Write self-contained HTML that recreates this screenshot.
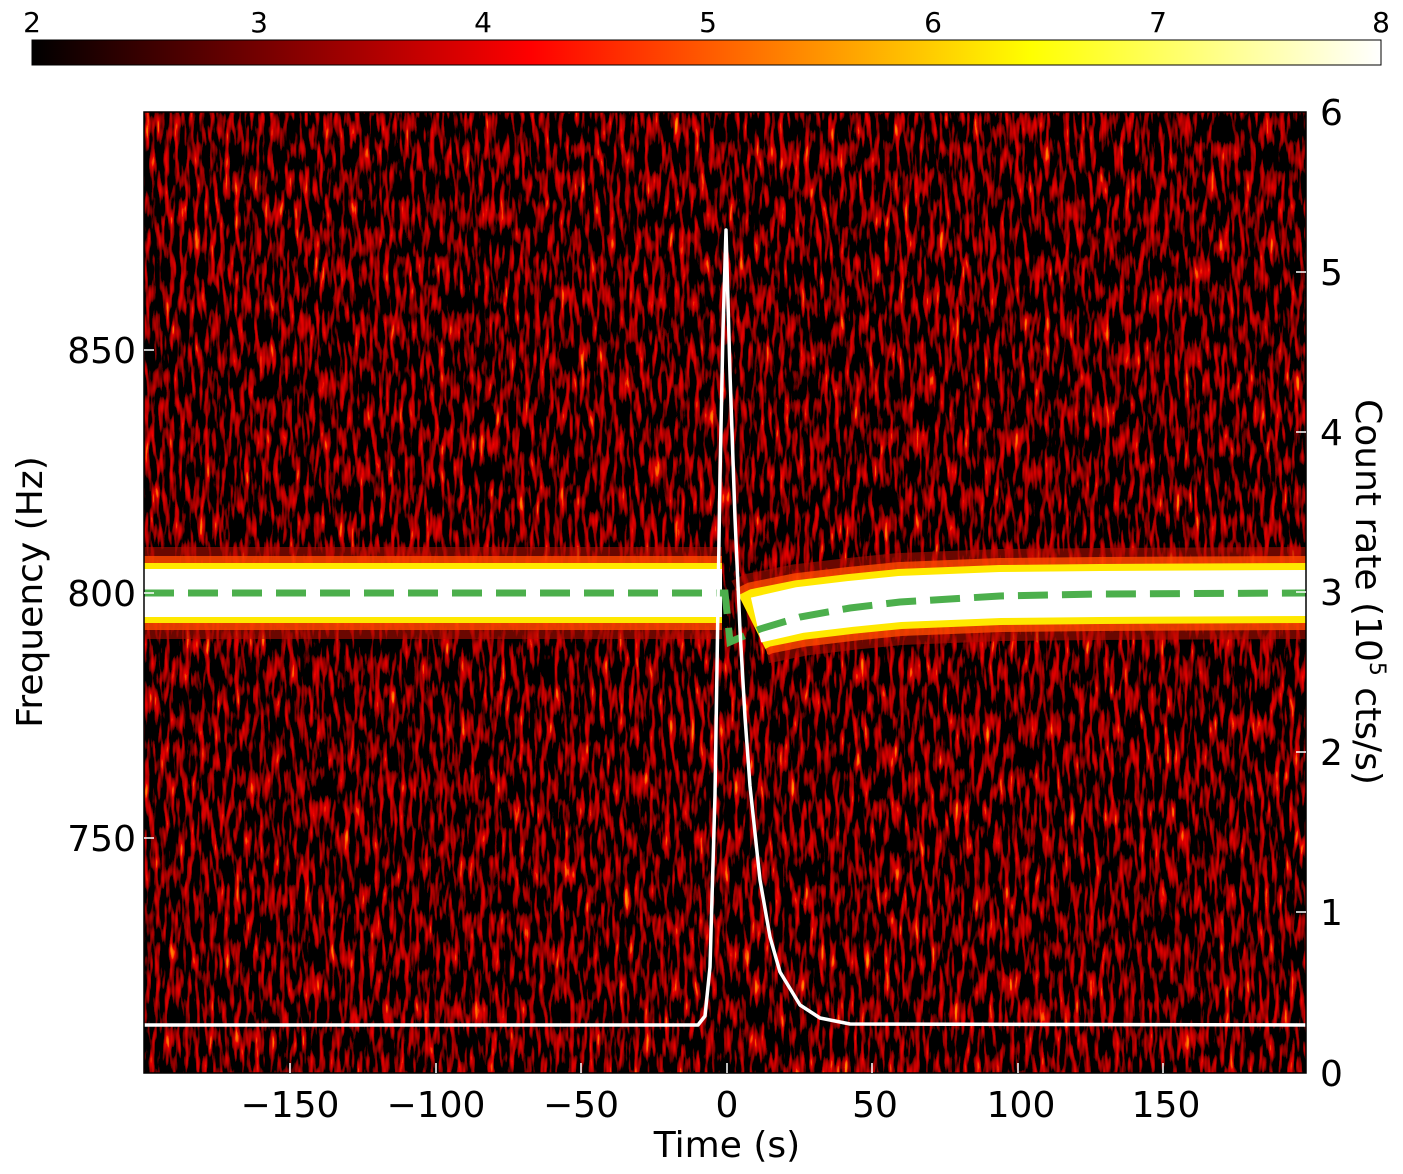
<!DOCTYPE html>
<html><head><meta charset="utf-8"><style>
html,body{margin:0;padding:0;background:#fff;}
svg{display:block;font-family:"DejaVu Sans","Liberation Sans",sans-serif;}
</style></head><body>
<svg width="1403" height="1174" viewBox="0 0 1403 1174" xmlns="http://www.w3.org/2000/svg">
<defs>
<linearGradient id="hot" x1="0" x2="1" y1="0" y2="0">
<stop offset="0" stop-color="#000"/>
<stop offset="0.37" stop-color="#ff0000"/>
<stop offset="0.74" stop-color="#ffff00"/>
<stop offset="1" stop-color="#ffffff"/>
</linearGradient>
<filter id="noise" x="0" y="0" width="100%" height="100%">
<feTurbulence type="fractalNoise" baseFrequency="0.2 0.035" numOctaves="2" seed="7"/>
<feColorMatrix type="matrix" values="3.2 0 0 0 -1.55  2 0 0 0 -1.5  0 0 0 0 0  0 0 0 0 1"/>
</filter>
<clipPath id="pc"><rect x="144" y="112" width="1162" height="961"/></clipPath>
</defs>
<rect x="32" y="40" width="1349" height="25" fill="url(#hot)" stroke="#000" stroke-width="1"/>
<g font-size="28" fill="#000" text-anchor="middle">
<text x="32" y="32">2</text><text x="259" y="32">3</text><text x="483" y="32">4</text>
<text x="708" y="32">5</text><text x="933" y="32">6</text><text x="1158" y="32">7</text><text x="1381" y="32">8</text>
</g>
<g clip-path="url(#pc)">
<rect x="144" y="112" width="1162" height="961" fill="#200000"/>
<rect x="144" y="112" width="1162" height="961" filter="url(#noise)"/>
<g fill="none" stroke-linecap="butt">
<path d="M144 593 H722" stroke="#b00c00" stroke-width="92" opacity="0.6"/>
<path d="M144 593 H722" stroke="#ff4a00" stroke-width="74" opacity="0.8"/>
<path d="M144 593 H722" stroke="#ffe800" stroke-width="60"/>
<path d="M144 593 H722" stroke="#fff" stroke-width="48"/>
<path d="M752 622 L760 618 L800 610 L850 604 L900 599 L1000 595 L1100 594 L1306 593" stroke="#b00c00" stroke-width="92" opacity="0.6"/>
<path d="M752 622 L760 618 L800 610 L850 604 L900 599 L1000 595 L1100 594 L1306 593" stroke="#ff4a00" stroke-width="74" opacity="0.8"/>
<path d="M752 622 L760 618 L800 610 L850 604 L900 599 L1000 595 L1100 594 L1306 593" stroke="#ffe800" stroke-width="60"/>
<path d="M756 620 L800 610 L850 604 L900 599 L1000 595 L1100 594 L1306 593" stroke="#fff" stroke-width="46"/>
</g>
<path d="M144 593 H725 L730 642 L760 629 L800 617 L850 608 L900 602 L1000 596 L1100 594 L1306 593" fill="none" stroke="#4caf4c" stroke-width="7" stroke-dasharray="30 14"/>
<path d="M144 1025 H698 L705 1016 L710 967 L715 795 L720 476 L723 330 L726 230 L730 374 L735 518 L740 630 L745 717 L750 786 L760 880 L770 937 L780 972 L800 1005 L820 1018 L850 1024 L1306 1025" fill="none" stroke="#fff" stroke-width="3.5" stroke-linejoin="round"/>
</g>
<rect x="144" y="112" width="1162" height="961" fill="none" stroke="#000" stroke-width="1.5"/>
<g stroke="#fff" stroke-width="1.5">
<path d="M290 1073v-10M436 1073v-10M581 1073v-10M727 1073v-10M872 1073v-10M1018 1073v-10M1163 1073v-10"/>
<path d="M144 350h10M144 593h10M144 838h10"/>
<path d="M1306 272h-10M1306 432h-10M1306 592h-10M1306 752h-10M1306 912h-10"/>
</g>
<g font-size="36" fill="#000">
<g text-anchor="middle">
<text x="290" y="1117">−150</text><text x="436" y="1117">−100</text><text x="581" y="1117">−50</text>
<text x="727" y="1117">0</text><text x="875" y="1117">50</text><text x="1021" y="1117">100</text><text x="1166" y="1117">150</text>
<text x="727" y="1157">Time (s)</text>
</g>
<g text-anchor="end">
<text x="136" y="363">850</text><text x="136" y="606">800</text><text x="136" y="851">750</text>
</g>
<g>
<text x="1320" y="125">6</text><text x="1320" y="285">5</text><text x="1320" y="445">4</text>
<text x="1320" y="605">3</text><text x="1320" y="765">2</text><text x="1320" y="925">1</text><text x="1320" y="1086">0</text>
</g>
<text transform="translate(42,592) rotate(-90)" text-anchor="middle">Frequency (Hz)</text>
<text transform="translate(1356,592) rotate(90)" text-anchor="middle">Count rate (10<tspan font-size="22" dy="-14">5</tspan><tspan dy="14"> cts/s)</tspan></text>
</g>
</svg>
</body></html>
